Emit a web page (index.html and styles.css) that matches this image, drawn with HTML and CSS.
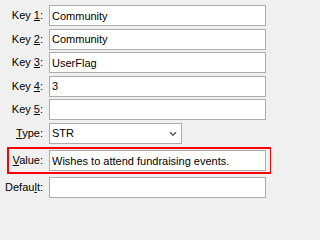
FILE: index.html
```html
<!DOCTYPE html>
<html>
<head>
<meta charset="utf-8">
<link rel="stylesheet" href="styles.css">
</head>
<body>
<form class="form">
  <div class="row">
    <label class="lbl">Key <u>1</u>:</label>
    <input class="field" type="text" value="Community">
  </div>
  <div class="row">
    <label class="lbl">Key <u>2</u>:</label>
    <input class="field" type="text" value="Community">
  </div>
  <div class="row">
    <label class="lbl">Key <u>3</u>:</label>
    <input class="field" type="text" value="UserFlag">
  </div>
  <div class="row">
    <label class="lbl">Key <u>4</u>:</label>
    <input class="field" type="text" value="3">
  </div>
  <div class="row">
    <label class="lbl">Key <u>5</u>:</label>
    <input class="field" type="text" value="">
  </div>
  <div class="row">
    <label class="lbl"><u>T</u>ype:</label>
    <div class="combo">
      <span class="combo-text">STR</span>
      <svg class="chev" width="8" height="6" viewBox="0 0 8 6"><path d="M1 1.2 L4 4.2 L7 1.2" fill="none" stroke="#5f5f5f" stroke-width="1.6"/></svg>
    </div>
  </div>
  <div class="row row-hl">
    <label class="lbl"><u>V</u>alue:</label>
    <input class="field" type="text" value="Wishes to attend fundraising events.">
  </div>
  <div class="row">
    <label class="lbl">Defau<u>l</u>t:</label>
    <input class="field" type="text" value="">
  </div>
</form>
</body>
</html>
```

FILE: styles.css
```css
html, body {
  margin: 0;
  padding: 0;
  background: #f0f0f0;
}
body {
  font-family: "Liberation Sans", Arial, sans-serif;
  font-size: 11px;
  color: #000;
  width: 271px;
  height: 202px;
  overflow: hidden;
}
.form {
  display: flex;
  flex-direction: column;
  gap: 2.5px;
  padding-top: 5px;
  margin: 0;
}
.row {
  display: flex;
  align-items: center;
  height: 21px;
}
.lbl {
  flex: 0 0 43px;
  width: 43px;
  text-align: right;
  margin-right: 6px;
  white-space: nowrap;
  line-height: 21px;
}
.lbl u {
  text-underline-offset: 1px;
}
.field {
  box-sizing: border-box;
  width: 217px;
  height: 21px;
  margin: 0;
  border: 1px solid #acacac;
  background: #fff;
  padding: 0 2px;
  font-family: "Liberation Sans", Arial, sans-serif;
  font-size: 11px;
  color: #000;
  outline: none;
}
.combo {
  box-sizing: border-box;
  width: 133px;
  height: 21px;
  border: 1px solid #acacac;
  background: #fff;
  display: flex;
  align-items: center;
  justify-content: space-between;
  padding: 0 4px 0 2px;
}
.chev {
  display: block;
  margin-top: 1px;
}
.row-hl {
  height: auto;
  margin-top: 1px;
  margin-left: 7px;
  width: 259px;
  border: 2px solid #ff0000;
  padding: 1px 2px 1px 0;
}
.row-hl .lbl {
  flex-basis: 34px;
  width: 34px;
}
```
